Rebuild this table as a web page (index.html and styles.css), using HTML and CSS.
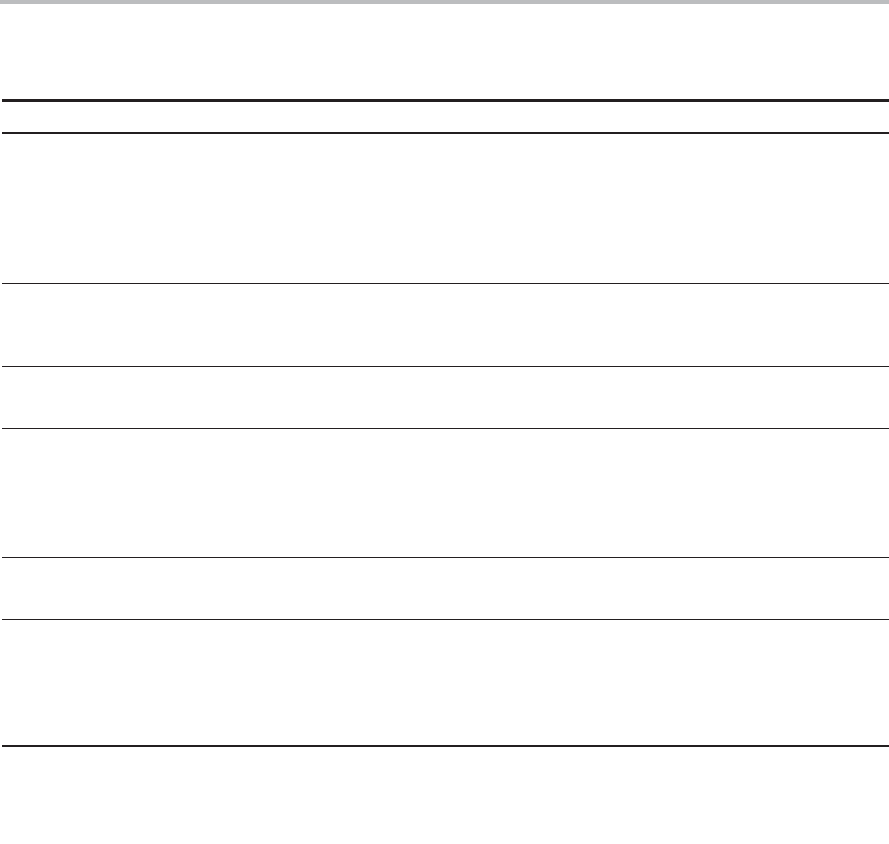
FILE: index.html
```html
<!DOCTYPE html>
<html lang="en">
<head>
<meta charset="utf-8">
<title>Table</title>
<link rel="stylesheet" href="styles.css">
</head>
<body>
<div class="topbar"></div>
<div class="page">
  <div class="table">
    <div class="row head"></div>
    <div class="row r1"></div>
    <div class="row r2"></div>
    <div class="row r3"></div>
    <div class="row r4"></div>
    <div class="row r5"></div>
    <div class="row r6"></div>
  </div>
</div>
</body>
</html>
```
FILE: styles.css
```css
html, body {
  margin: 0;
  padding: 0;
  background: #ffffff;
  font-family: "Liberation Sans", Arial, sans-serif;
}
.topbar {
  height: 4px;
  background: #bcbdbf;
}
.page {
  padding: 95px 0 0 2px;
}
.table {
  border-top: 3px solid #231f20;
  display: flex;
  flex-direction: column;
}
.row {
  border-bottom: 1px solid #231f20;
}
.head { height: 30px; border-bottom-width: 2px; }
.r1 { height: 149px; }
.r2 { height: 82px; }
.r3 { height: 61px; }
.r4 { height: 128px; }
.r5 { height: 61px; }
.r6 { height: 125px; border-bottom-width: 2px; }
```
